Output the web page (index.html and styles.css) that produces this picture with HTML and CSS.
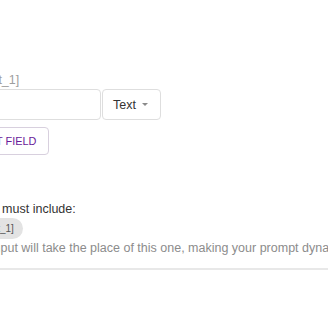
FILE: index.html
```html
<!DOCTYPE html>
<html lang="en">
<head>
    <meta charset="UTF-8">
    <meta name="viewport" content="width=device-width, initial-scale=1.0">
    <title>Prompt Inputs</title>
    <link rel="stylesheet" href="styles.css">
</head>
<body>
    <section class="panel">
        <div class="field">
            <label class="field-label" for="input-1">Name: [input_1]</label>
            <div class="field-row">
                <input type="text" id="input-1" class="field-input">
                <button class="type-select">Text <span class="caret"></span></button>
            </div>
        </div>
        <button class="btn-add">Add Input Field</button>

        <div class="rules">
            <p class="rules-title">Your prompt must include:</p>
            <div class="chips">
                <span class="chip">[user_input_1]</span>
            </div>
            <p class="rules-note">Each user input will take the place of this one, making your prompt dynamic.</p>
        </div>
    </section>
    <hr class="divider">
</body>
</html>
```

FILE: styles.css
```css
/* General body styling */
body {
    font-family: "Liberation Sans", Arial, sans-serif;
    font-size: 12.5px;
    margin: 0;
    padding: 0;
    background-color: #ffffff;
    color: #333;
    overflow: hidden;
}

.panel {
    margin-left: -69px;
    padding-top: 72px;
    width: 480px;
}

.field-label {
    display: block;
    line-height: 16px;
    margin-bottom: 1px;
    color: #9e9e9e;
}

.field-row {
    display: flex;
}

.field-input {
    width: 170px;
    height: 31px;
    box-sizing: border-box;
    border: 1px solid #dedede;
    border-radius: 4px;
    padding: 0 9px;
    font: inherit;
}

.type-select {
    display: flex;
    align-items: center;
    width: 59px;
    height: 31px;
    box-sizing: border-box;
    margin-left: 1px;
    padding: 0 0 0 10px;
    border: 1px solid #dedede;
    border-radius: 4px;
    background: #fff;
    font-family: inherit;
    font-size: 12.5px;
    color: #333;
}

.caret {
    width: 0;
    height: 0;
    margin-left: 6px;
    border-left: 3.5px solid transparent;
    border-right: 3.5px solid transparent;
    border-top: 3.5px solid #8a8a8a;
}

/* Add button */
.btn-add {
    margin-top: 7px;
    height: 28px;
    padding: 0 12px 0 12px;
    border: 1px solid #d8d0de;
    border-radius: 4px;
    background: #fff;
    color: #6a1b9a;
    font-family: inherit;
    font-size: 10.9px;
    text-transform: uppercase;
}

/* Rules section */
.rules {
    margin-top: 45px;
}

.rules-title {
    margin: 0;
    line-height: 18px;
    color: #333;
}

.chips {
    display: flex;
    gap: 6px;
    margin-left: 10px;
}

.chip {
    display: inline-block;
    height: 21px;
    line-height: 21px;
    padding: 0 9.5px;
    border-radius: 11px;
    background-color: #e3e3e3;
    color: #555;
    font-size: 10px;
}

.rules-note {
    margin: 1px 0 0;
    line-height: 16px;
    color: #8c8c8c;
    white-space: nowrap;
}

.divider {
    margin: 12px 0 0;
    border: none;
    height: 2px;
    background-color: #e8e8e8;
}
```
